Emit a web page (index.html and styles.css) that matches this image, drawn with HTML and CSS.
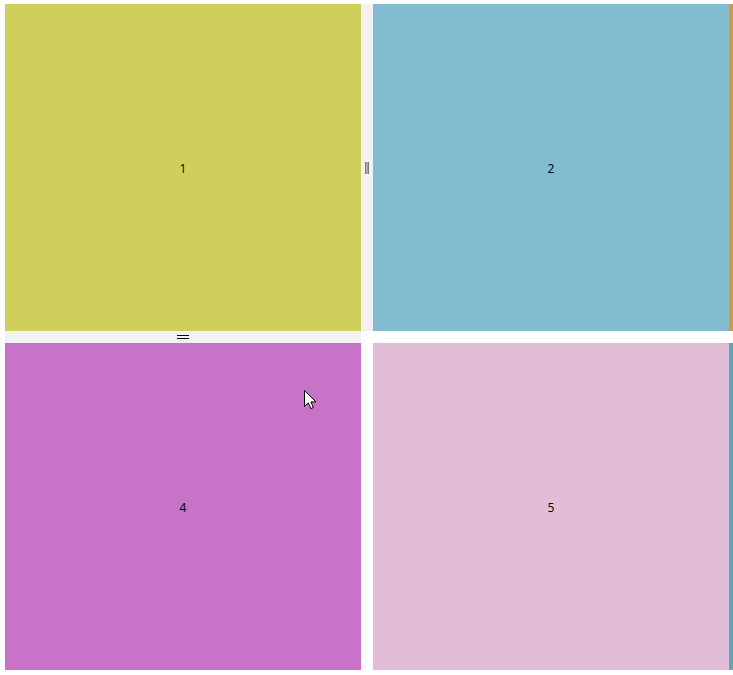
FILE: index.html
```html
<!DOCTYPE html>
<html>
<head>
<meta charset="utf-8">
<link rel="stylesheet" href="styles.css">
</head>
<body>
<div class="layout">
  <div class="panel p1">1</div>
  <div class="vgutter"><span class="vhandle"></span></div>
  <div class="panel p2">2</div>
  <div class="strip orange"></div>

  <div class="hgutter"><span class="hhandle"></span></div>
  <div class="blank"></div>
  <div class="blank"></div>
  <div class="blank"></div>

  <div class="panel p4">4</div>
  <div class="blank"></div>
  <div class="panel p5">5</div>
  <div class="strip teal"></div>
</div>
<svg class="cursor" width="14" height="22" viewBox="0 0 14 22">
  <path d="M0.5 0.5 L0.5 16.5 L4.3 12.8 L6.8 18.6 L9.3 17.5 L6.9 11.9 L12 11.9 Z" fill="#fff" stroke="#000" stroke-width="1" stroke-linejoin="miter"/>
</svg>
</body>
</html>
```
FILE: styles.css
```css
html, body {
  margin: 0;
  padding: 0;
  background: #ffffff;
}
.layout {
  display: grid;
  grid-template-columns: 356px 12px 356px 4px;
  grid-template-rows: 327px 12px 327px;
  padding: 4px 0 0 5px;
  font-family: "Open Sans", "Liberation Sans", sans-serif;
  font-size: 12px;
  color: #000;
}
.panel {
  display: flex;
  align-items: center;
  justify-content: center;
  padding-top: 2px;
  box-sizing: border-box;
}
.p1 { background: #cfd05b; }
.p2 { background: #83bbd0; }
.p4 { background: #c673c8; }
.p5 { background: #e1bdd7; }
.strip.orange { background: #d39a3c; }
.strip.teal { background: #5aa9b6; }
.vgutter {
  background: #f2f2f2;
  display: flex;
  align-items: center;
  justify-content: center;
}
.vhandle {
  width: 2px;
  height: 12px;
  border-left: 1px solid #7a7a7a;
  border-right: 1px solid #7a7a7a;
  background: #a9a9a9;
}
.hgutter {
  background: #f2f2f2;
  display: flex;
  align-items: center;
  justify-content: center;
}
.hhandle {
  width: 12px;
  height: 2px;
  border-top: 1px solid #000;
  border-bottom: 1px solid #000;
}
.cursor {
  position: absolute;
  left: 304px;
  top: 390px;
}
```
